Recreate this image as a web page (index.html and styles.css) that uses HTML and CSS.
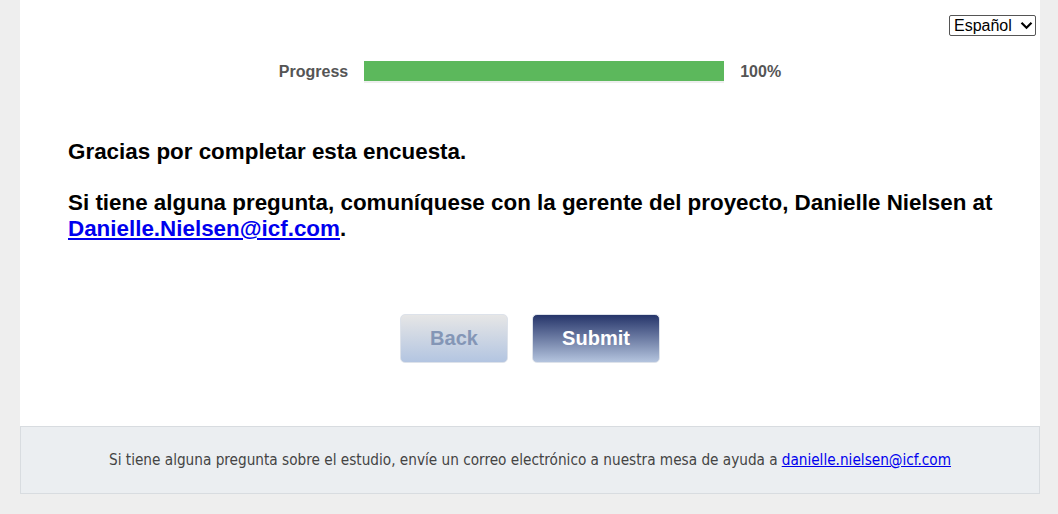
FILE: index.html
```html
<!DOCTYPE html>
<html lang="es">
  <head>
    <meta charset="UTF-8" />
    <meta name="viewport" content="width=device-width, initial-scale=1.0" />
    <title>Encuesta</title>
    <link rel="stylesheet" href="styles.css">
  </head>
  <body>
    <div class="page">
      <div class="survey">
        <div class="lang-bar">
          <div class="lang-wrap">
            <select class="lang-select">
              <option>Español</option>
              <option>English</option>
            </select>
            <svg class="lang-arrow" width="13" height="9" viewBox="0 0 13 9">
              <path d="M1.5 1.8 L6.5 6.8 L11.5 1.8" fill="none" stroke="#000" stroke-width="2.2"/>
            </svg>
          </div>
        </div>

        <div class="progress-row">
          <span class="progress-label">Progress</span>
          <div class="progress-track">
            <div class="progress-fill" style="width: 100%"></div>
          </div>
          <span class="progress-label">100%</span>
        </div>

        <div class="message">
          <p>Gracias por completar esta encuesta.</p>
          <p>Si tiene alguna pregunta, comuníquese con la gerente del proyecto, Danielle Nielsen at <a href="#">Danielle.Nielsen@icf.com</a>.</p>
        </div>

        <div class="nav-buttons">
          <button class="btn btn-back">Back</button>
          <button class="btn btn-submit">Submit</button>
        </div>
      </div>

      <div class="footer">
        Si tiene alguna pregunta sobre el estudio, envíe un correo electrónico a nuestra mesa de ayuda a <a href="#">danielle.nielsen@icf.com</a>
      </div>
    </div>
  </body>
</html>
```

FILE: styles.css
```css
/* General Page Styling */
body {
  margin: 0;
  background-color: #eeeeee;
  font-family: "Liberation Sans", Arial, sans-serif;
  color: #000000;
}

.page {
  width: 1020px;
  margin: 0 0 0 20px;
  padding-bottom: 20px;
}

.survey {
  background-color: #ffffff;
  height: 426px;
  box-sizing: border-box;
  padding-top: 15px;
}

/* Language picker */
.lang-bar {
  display: flex;
  justify-content: flex-end;
  padding-right: 4px;
}

.lang-wrap {
  position: relative;
}

.lang-select {
  appearance: none;
  -webkit-appearance: none;
  display: block;
  width: 87px;
  height: 21px;
  font-family: "Liberation Sans", Arial, sans-serif;
  font-size: 16px;
  line-height: 19px;
  padding: 0 0 0 4px;
  border: 1px solid #555555;
  border-radius: 2px;
  background-color: #ffffff;
  color: #000000;
}

.lang-arrow {
  position: absolute;
  right: 3px;
  top: 6px;
  pointer-events: none;
}

/* Progress */
.progress-row {
  display: flex;
  justify-content: center;
  align-items: center;
  gap: 16px;
  margin-top: 25px;
}

.progress-label {
  font-size: 16px;
  font-weight: bold;
  color: #555555;
}

.progress-track {
  width: 360px;
  height: 22px;
  background-color: #eeeeee;
}

.progress-fill {
  height: 20px;
  background-color: #5cb85c;
}

/* Thank you text */
.message {
  padding: 0 30px 0 48px;
  margin-top: 56px;
  font-size: 22.4px;
  font-weight: bold;
  line-height: 26px;
}

.message p {
  margin: 0 0 25px 0;
}

.message a {
  color: #0000ee;
}

/* Buttons */
.nav-buttons {
  display: flex;
  justify-content: center;
  gap: 24px;
  margin-top: 72px;
}

.btn {
  height: 49px;
  font-family: "Liberation Sans", Arial, sans-serif;
  font-size: 20px;
  font-weight: bold;
  border: 1px solid #dde2ea;
  border-radius: 5px;
  cursor: pointer;
}

.btn-back {
  width: 108px;
  color: #8496b6;
  background: linear-gradient(#e6e6e6, #b3c5e1);
}

.btn-submit {
  width: 128px;
  color: #ffffff;
  background: linear-gradient(#26356a, #b4c4de);
}

/* Footer */
.footer {
  background-color: #ebeef1;
  border: 1px solid #d8dce0;
  height: 66px;
  display: flex;
  align-items: center;
  justify-content: center;
  font-family: "DejaVu Sans Condensed", "Liberation Sans Narrow", sans-serif;
  font-size: 15.2px;
  color: #444444;
}

.footer a {
  color: #0000ee;
  margin-left: 4px;
}
```
